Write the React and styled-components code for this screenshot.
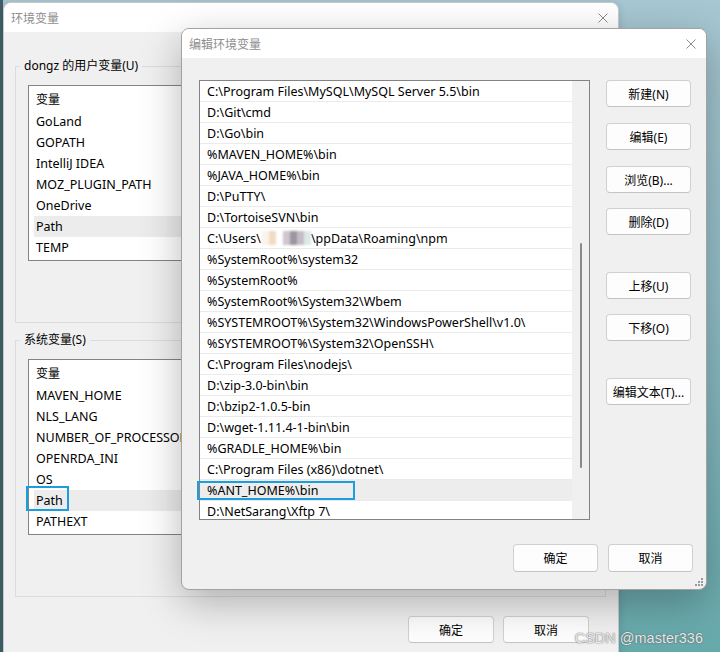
import React from "react";
import styled, { createGlobalStyle } from "styled-components";

const GlobalStyle = createGlobalStyle`
  html, body {
    margin: 0;
    padding: 0;
  }
  * {
    box-sizing: border-box;
  }
`;

const Desktop = styled.div`
  position: relative;
  width: 720px;
  height: 652px;
  overflow: hidden;
  background: linear-gradient(90deg, #3f5f68 0 3px, transparent 3px),
    linear-gradient(180deg, #a7c7d2 0%, #93bfc8 45%, #66a9ab 100%);
  font-family: "Noto Sans", "Noto Sans CJK SC", sans-serif;
  font-size: 12px;
  color: #000;
`;

const Window = styled.div`
  position: absolute;
  left: ${(p) => p.x}px;
  top: ${(p) => p.y}px;
  width: ${(p) => p.w}px;
  height: ${(p) => p.h}px;
  display: flex;
  flex-direction: column;
  background: #f0f0f0;
  border: 1px solid ${(p) => (p.front ? "#a2a2a2" : "#c9c9c9")};
  border-radius: 8px;
  overflow: hidden;
  box-shadow: ${(p) =>
    p.front ? "0 12px 40px rgba(0, 0, 0, 0.28)" : "0 2px 8px rgba(0, 0, 0, 0.15)"};
`;

const TitleBar = styled.div`
  height: 29px;
  flex: 0 0 29px;
  display: flex;
  align-items: center;
  justify-content: space-between;
  padding: 0 10px 0 7px;
  background: #fff;
  color: #8e8e8e;
  font-size: 12px;
`;

const CloseIcon = () => (
  <svg width="10" height="10" viewBox="0 0 10 10">
    <path d="M0.5 0.5 L9.5 9.5 M9.5 0.5 L0.5 9.5" stroke="#8a8a8a" strokeWidth="1" />
  </svg>
);

/* ---------- back window ---------- */

const BackBody = styled.div`
  flex: 1;
  padding: 34px 12px 0 11px;
  display: flex;
  flex-direction: column;
`;

const GroupBox = styled.div`
  border: 1px solid #dcdcdc;
  padding: 0 12px 61px 12px;
  margin-top: ${(p) => p.top || 0}px;
`;

const GroupLabel = styled.div`
  width: fit-content;
  margin: -9px 0 0 -8px;
  padding: 0 4px;
  line-height: 16px;
  background: #f0f0f0;
  color: #000;
`;

const VarList = styled.div`
  margin-top: ${(p) => p.gap}px;
  height: 176px;
  width: 420px;
  background: #fff;
  border: 1px solid #838383;
  display: flex;
  flex-direction: column;
  overflow: hidden;
  font-size: 12.5px;
`;

const VarHeader = styled.div`
  height: 25px;
  flex: 0 0 25px;
  display: flex;
  align-items: center;
  padding-left: 7px;
  font-size: 12px;
`;

const VarRow = styled.div`
  height: 21px;
  flex: 0 0 21px;
  display: flex;
  align-items: center;
  margin-left: 5px;
  padding-left: 2px;
  white-space: nowrap;
  background: ${(p) => (p.selected ? "#ececec" : "transparent")};
`;

const BackFooter = styled.div`
  display: flex;
  justify-content: flex-end;
  gap: 9px;
  margin-top: 19px;
  padding-right: 17px;
`;

const Button = styled.div`
  width: ${(p) => p.w || 85}px;
  height: ${(p) => p.h || 27}px;
  margin-top: ${(p) => p.mt || 0}px;
  display: flex;
  align-items: center;
  justify-content: center;
  background: #fdfdfd;
  border: 1px solid #d0d0d0;
  border-bottom-color: #c4c4c4;
  border-radius: 4px;
  color: #000;
  font-size: 12px;
  white-space: nowrap;
`;

/* ---------- front dialog ---------- */

const FrontBody = styled.div`
  flex: 1;
  padding: 22px 13px 0 17px;
  display: flex;
  flex-direction: column;
`;

const MainRow = styled.div`
  display: flex;
  gap: 16px;
`;

const PathList = styled.div`
  width: 391px;
  height: 440px;
  background: #fff;
  border: 1px solid #838383;
  display: flex;
  font-size: 12.5px;
`;

const PathRows = styled.div`
  flex: 1;
  overflow: hidden;
  display: flex;
  flex-direction: column;
`;

const PathRow = styled.div`
  height: 21px;
  flex: 0 0 21px;
  display: flex;
  align-items: center;
  padding-left: 7px;
  white-space: nowrap;
  border-bottom: 1px solid #ebebeb;
  background: ${(p) => (p.selected ? "#ededed" : "#fff")};
`;

const ScrollTrack = styled.div`
  width: 17px;
  flex: 0 0 17px;
  background: #f0f0f0;
  display: flex;
  justify-content: center;
  padding-top: 162px;
`;

const ScrollThumb = styled.div`
  width: 2px;
  height: 225px;
  border-radius: 1px;
  background: #8a8a8a;
`;

const ButtonColumn = styled.div`
  display: flex;
  flex-direction: column;
`;

const FrontFooter = styled.div`
  display: flex;
  justify-content: flex-end;
  gap: 10px;
  margin-top: 24px;
`;

const Mosaic = styled.span`
  display: inline-flex;
  height: 14px;
  margin: 0 0 0 1px;
  filter: blur(0.8px);
`;

const MosaicBlock = styled.span`
  width: 7px;
  height: 14px;
  background: ${(p) => p.c};
`;

const Grip = styled.svg`
  position: absolute;
  right: 3px;
  bottom: 3px;
`;

const Annotation = styled.div`
  position: absolute;
  left: ${(p) => p.x}px;
  top: ${(p) => p.y}px;
  width: ${(p) => p.w}px;
  height: ${(p) => p.h}px;
  border: 2px solid #1c9ddc;
`;

const Watermark = styled.div`
  position: absolute;
  right: 17px;
  bottom: 6px;
  font-family: "Liberation Sans", Arial, sans-serif;
  font-size: 14.5px;
  color: rgba(255, 255, 255, 0.85);
  text-shadow: 0 0 1px rgba(90, 90, 90, 0.9), 0 0 2px rgba(90, 90, 90, 0.5);
`;

const userVars = ["GoLand", "GOPATH", "IntelliJ IDEA", "MOZ_PLUGIN_PATH", "OneDrive", "Path", "TEMP"];
const sysVars = ["MAVEN_HOME", "NLS_LANG", "NUMBER_OF_PROCESSORS", "OPENRDA_INI", "OS", "Path", "PATHEXT"];

const mosaic = ["#fbf3ea", "#f0dcc6", "#ffffff", "#cfc6cf", "#9d96a2", "#c3bec6", "#dfe8e8"];

const paths = [
  "C:\\Program Files\\MySQL\\MySQL Server 5.5\\bin",
  "D:\\Git\\cmd",
  "D:\\Go\\bin",
  "%MAVEN_HOME%\\bin",
  "%JAVA_HOME%\\bin",
  "D:\\PuTTY\\",
  "D:\\TortoiseSVN\\bin",
  "npm",
  "%SystemRoot%\\system32",
  "%SystemRoot%",
  "%SystemRoot%\\System32\\Wbem",
  "%SYSTEMROOT%\\System32\\WindowsPowerShell\\v1.0\\",
  "%SYSTEMROOT%\\System32\\OpenSSH\\",
  "C:\\Program Files\\nodejs\\",
  "D:\\zip-3.0-bin\\bin",
  "D:\\bzip2-1.0.5-bin",
  "D:\\wget-1.11.4-1-bin\\bin",
  "%GRADLE_HOME%\\bin",
  "C:\\Program Files (x86)\\dotnet\\",
  "%ANT_HOME%\\bin",
  "D:\\NetSarang\\Xftp 7\\",
];

const sideButtons = [
  { label: "新建(N)", mt: 0 },
  { label: "编辑(E)", mt: 16 },
  { label: "浏览(B)...", mt: 16 },
  { label: "删除(D)", mt: 15 },
  { label: "上移(U)", mt: 37 },
  { label: "下移(O)", mt: 15 },
  { label: "编辑文本(T)...", mt: 37 },
];

const VarBox = ({ vars, gap }) => (
  <VarList gap={gap}>
    <VarHeader>变量</VarHeader>
    {vars.map((v) => (
      <VarRow key={v} selected={v === "Path"}>
        {v}
      </VarRow>
    ))}
  </VarList>
);

const PathText = ({ text }) => {
  if (text !== "npm") return text;
  return (
    <>
      C:\Users\
      <Mosaic>
        {mosaic.map((c, i) => (
          <MosaicBlock key={i} c={c} />
        ))}
      </Mosaic>
      \ppData\Roaming\npm
    </>
  );
};

export default function App() {
  return (
    <Desktop>
      <GlobalStyle />

      <Window x={3} y={2} w={616} h={680}>
        <TitleBar>
          <span>环境变量</span>
          <CloseIcon />
        </TitleBar>
        <BackBody>
          <GroupBox>
            <GroupLabel>dongz 的用户变量(U)</GroupLabel>
            <VarBox vars={userVars} gap={11} />
          </GroupBox>
          <GroupBox top={17}>
            <GroupLabel>系统变量(S)</GroupLabel>
            <VarBox vars={sysVars} gap={11} />
          </GroupBox>
          <BackFooter>
            <Button w={86} h={27}>确定</Button>
            <Button w={86} h={27}>取消</Button>
          </BackFooter>
        </BackBody>
      </Window>

      <Window front x={181} y={28} w={526} h={562}>
        <TitleBar>
          <span>编辑环境变量</span>
          <CloseIcon />
        </TitleBar>
        <FrontBody>
          <MainRow>
            <PathList>
              <PathRows>
                {paths.map((p, i) => (
                  <PathRow key={i} selected={i === 19}>
                    <PathText text={p} />
                  </PathRow>
                ))}
              </PathRows>
              <ScrollTrack>
                <ScrollThumb />
              </ScrollTrack>
            </PathList>
            <ButtonColumn>
              {sideButtons.map((b) => (
                <Button key={b.label} mt={b.mt}>
                  {b.label}
                </Button>
              ))}
            </ButtonColumn>
          </MainRow>
          <FrontFooter>
            <Button h={28}>确定</Button>
            <Button h={28}>取消</Button>
          </FrontFooter>
        </FrontBody>
        <Grip width="8" height="8" viewBox="0 0 8 8">
          <g fill="#9a9a9a">
            <rect x="6" y="0" width="2" height="2" />
            <rect x="3" y="3" width="2" height="2" />
            <rect x="6" y="3" width="2" height="2" />
            <rect x="0" y="6" width="2" height="2" />
            <rect x="3" y="6" width="2" height="2" />
            <rect x="6" y="6" width="2" height="2" />
          </g>
        </Grip>
      </Window>

      <Annotation x={26} y={486} w={43} h={25} />
      <Annotation x={197} y={481} w={158} h={19} />

      <Watermark>CSDN @master336</Watermark>
    </Desktop>
  );
}
